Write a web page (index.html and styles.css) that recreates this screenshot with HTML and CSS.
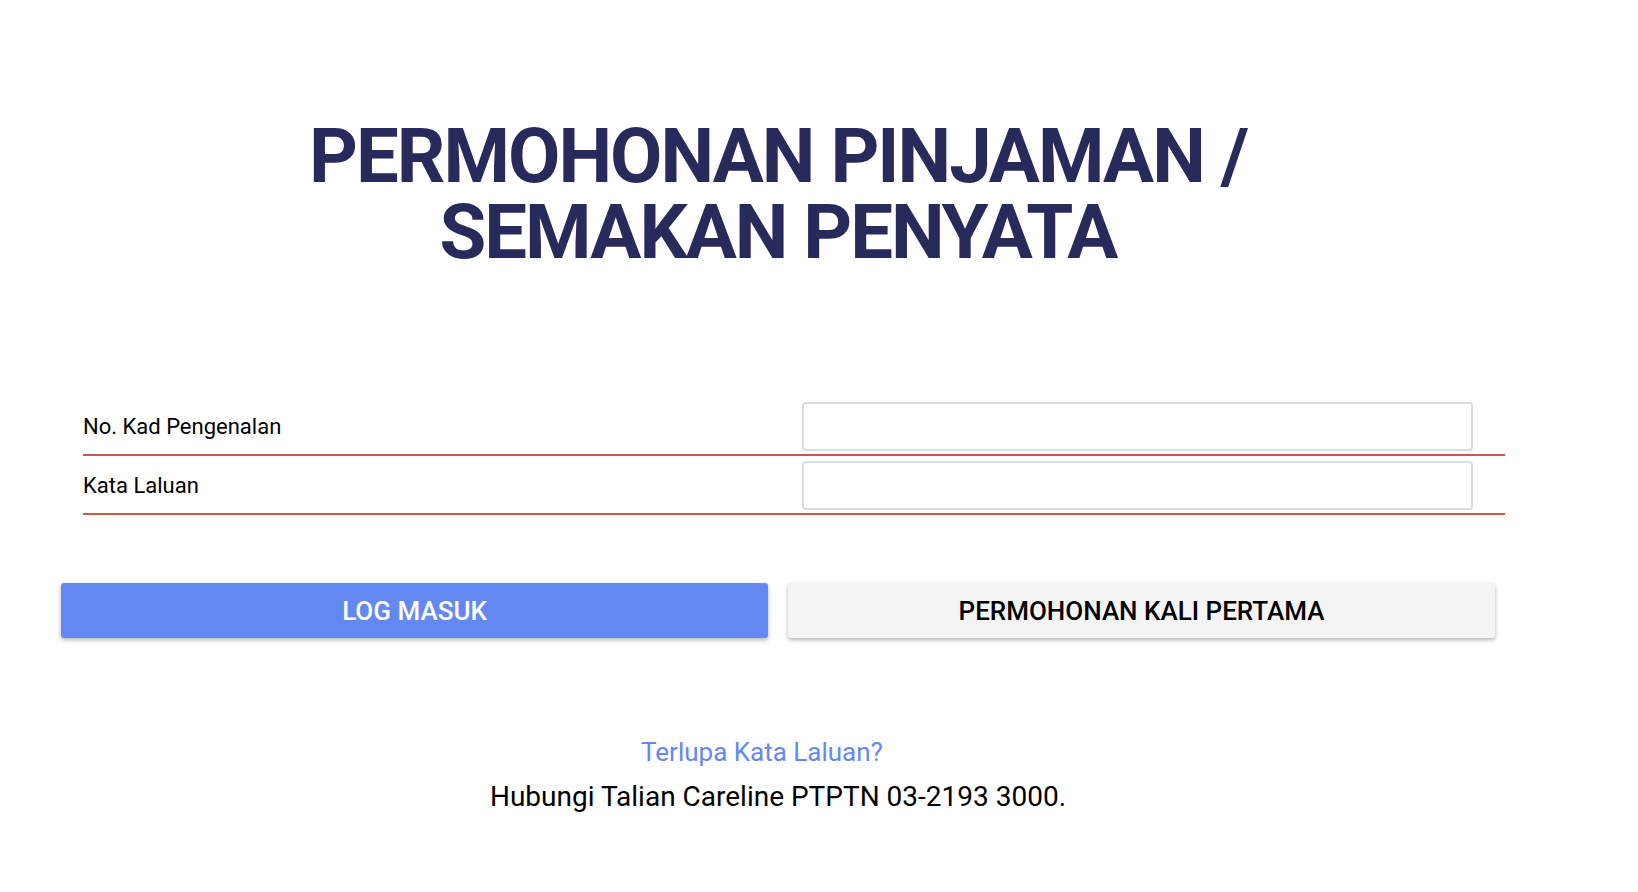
FILE: index.html
```html
<!DOCTYPE html>
<html lang="ms">
<head>
    <meta charset="UTF-8">
    <meta name="viewport" content="width=device-width, initial-scale=1.0">
    <title>Log Masuk</title>
    <link rel="stylesheet" href="styles.css">
</head>
<body>
    <div class="page">
        <h1 class="title">PERMOHONAN PINJAMAN /<br>SEMAKAN PENYATA</h1>

        <form class="login">
            <div class="row">
                <label for="ic">No. Kad Pengenalan</label>
                <input type="text" id="ic">
            </div>
            <div class="row">
                <label for="pw">Kata Laluan</label>
                <input type="password" id="pw">
            </div>

            <div class="actions">
                <button type="button" class="btn btn-primary">LOG MASUK</button>
                <button type="button" class="btn btn-light">PERMOHONAN KALI PERTAMA</button>
            </div>
        </form>

        <div class="help">
            <a href="#" class="forgot">Terlupa Kata Laluan?</a>
            <p>Hubungi Talian Careline PTPTN 03-2193 3000.</p>
        </div>
    </div>
</body>
</html>
```

FILE: styles.css
```css
body { margin: 0; font-family: Roboto, "Liberation Sans", sans-serif; color: #000; background: #fff; }
.page { width: 1434px; margin-left: 61px; }
.title { margin: 118px 0 0; text-align: center; font-size: 76px; line-height: 76px; font-weight: 700; letter-spacing: -2px; color: #282a5c; }
.login { margin-top: 127px; }
.row { display: flex; align-items: center; margin: 0 -10px 0 22px; padding: 5px 0 3px; border-bottom: 2px solid #d35546; }
.row label { width: 719px; font-size: 22px; }
.row input { width: 671px; height: 49px; box-sizing: border-box; border: 2px solid #ddd; border-radius: 4px; }
.actions { display: flex; gap: 20px; margin-top: 68px; }
.btn { flex: 1; height: 55px; border: none; border-radius: 3px; font-family: inherit; font-size: 26px; font-weight: 500; box-shadow: 0 2px 4px rgba(0,0,0,.3); }
.btn-primary { background: #6389f0; color: #fff; }
.btn-light { background: #f4f4f4; color: #000; }
.help { text-align: center; margin-top: 99px; }
.forgot { font-size: 26px; color: #6389f0; text-decoration: none; margin-left: -32px; }
.help p { margin: 13px 0 0; font-size: 28px; }
```
